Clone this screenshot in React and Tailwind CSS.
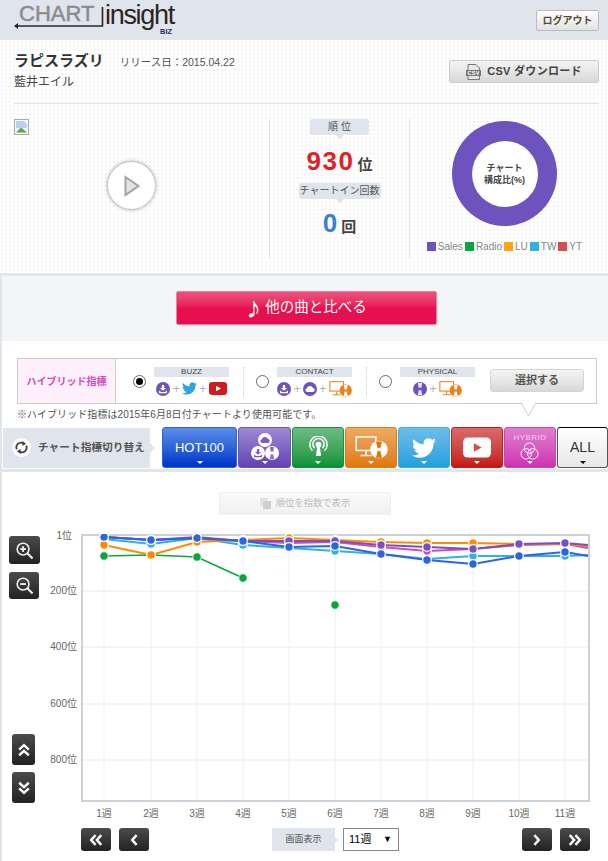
import React from "react";

const FONT = { fontFamily: '"Liberation Sans", "Noto Sans CJK JP", sans-serif' };

const weeks = ["1週", "2週", "3週", "4週", "5週", "6週", "7週", "8週", "9週", "10週", "11週"];
const weekX = [24, 71, 117, 163, 209, 255, 301, 347, 393, 439, 485];

// chart series, y values in px from the top of the plot (last value runs off the right edge)
const series = [
  { color: "#33aee6", pts: [5, 10, 4, 11, 14, 17, 20, 25, 22, 22, 22, 21] },
  { color: "#d14cb8", pts: [3, 6, 3, 7, 9, 8, 13, 17, 15, 11, 10, 14] },
  { color: "#ff8c00", pts: [11, 21, 8, 6, 4, 6, 8, 9, 9, 10, 10, 12] },
  { color: "#7a4fc0", pts: [3, 6, 4, 7, 7, 7, 11, 13, 15, 10, 9, 11] },
  { color: "#2a66e0", pts: [3, 6, 4, 7, 13, 12, 20, 26, 30, 22, 18, 22] },
];

const Triangle = ({ className }) => (
  <span className={`block w-0 h-0 border-l-[3px] border-r-[3px] border-t-[3px] border-l-transparent border-r-transparent ${className}`} />
);

const DarkButton = ({ className, children }) => (
  <button className={`flex items-center justify-center rounded-[3px] bg-gradient-to-b from-[#4c4c4c] to-[#222] text-white ${className}`}>
    {children}
  </button>
);

const Chevrons = ({ dir, double, size = 14 }) => {
  const rot = { left: 0, right: 180, up: 90, down: 270 }[dir];
  return (
    <svg width={size} height={size} viewBox="0 0 16 16" fill="none" stroke="white" strokeWidth="2.8" style={{ transform: `rotate(${rot}deg)` }}>
      {double ? (
        <>
          <path d="M7.5 2.5 L2.5 8 L7.5 13.5" />
          <path d="M14 2.5 L9 8 L14 13.5" />
        </>
      ) : (
        <path d="M11 2.5 L6 8 L11 13.5" />
      )}
    </svg>
  );
};

const Zoom = ({ minus }) => (
  <svg width="19" height="19" viewBox="0 0 20 20" fill="none" stroke="#eee" strokeWidth="1.7">
    <circle cx="8.5" cy="8.5" r="6.2" />
    <path d="M13 13 L18.5 18.5" strokeWidth="2.2" />
    <path d="M5.5 8.5 H11.5" strokeWidth="2" />
    {!minus && <path d="M8.5 5.5 V11.5" strokeWidth="2" />}
  </svg>
);

// small round metric icons
const SalesIcon = ({ size = 14, color = "#6e52bd", fg = "white" }) => (
  <svg width={size} height={size} viewBox="0 0 16 16">
    <circle cx="8" cy="8" r="8" fill={color} />
    <path d="M6.7 3.5 H9.3 V6.8 H11.5 L8 10 L4.5 6.8 H6.7 Z M3.5 10 H5 V11.3 H11 V10 H12.5 V12.8 H3.5 Z" fill={fg} />
  </svg>
);
const CloudIcon = ({ size = 14, color = "#6e52bd", fg = "white" }) => (
  <svg width={size} height={size} viewBox="0 0 16 16">
    <circle cx="8" cy="8" r="8" fill={color} />
    <path d="M4.5 11.5 A2.3 2.3 0 0 1 4.5 7 A3.6 3.6 0 0 1 11.2 6.6 A2.5 2.5 0 0 1 11.5 11.5 Z" fill={fg} />
  </svg>
);
const DiscIcon = ({ size = 14, color = "#6e52bd", fg = "white" }) => (
  <svg width={size} height={size} viewBox="0 0 16 16">
    <circle cx="8" cy="8" r="8" fill={color} />
    <path d="M5.5 1 L10.5 1 L9.2 8 L10.5 15 L5.5 15 L6.8 8 Z" fill={fg} opacity="0.85" />
    <circle cx="8" cy="8" r="1.7" fill={color} />
  </svg>
);
const TwitterIcon = ({ size = 15, color = "#2ba6e1" }) => (
  <svg width={size} height={size} viewBox="0 0 24 24" fill={color}>
    <path d="M23.95 4.57a10 10 0 0 1-2.82.77 4.96 4.96 0 0 0 2.16-2.72c-.95.56-2 .96-3.12 1.19a4.92 4.92 0 0 0-8.38 4.48C7.69 8.1 4.07 6.13 1.64 3.16a4.82 4.82 0 0 0-.67 2.48c0 1.71.87 3.21 2.19 4.1a4.9 4.9 0 0 1-2.23-.62v.06a4.92 4.92 0 0 0 3.95 4.83 4.9 4.9 0 0 1-2.21.08 4.94 4.94 0 0 0 4.6 3.42A9.87 9.87 0 0 1 0 19.54a13.94 13.94 0 0 0 7.55 2.21c9.05 0 14-7.5 14-13.98 0-.21 0-.42-.02-.63a9.94 9.94 0 0 0 2.46-2.55z" />
  </svg>
);
const YoutubeIcon = ({ w = 18, h = 13, bg = "#d01c1c", fg = "white" }) => (
  <svg width={w} height={h} viewBox="0 0 18 13">
    <rect width="18" height="13" rx="3" fill={bg} />
    <path d="M7 3.8 L12 6.5 L7 9.2 Z" fill={fg} />
  </svg>
);
const MonitorIcon = ({ w = 23, h = 16, color = "#ee7f1a", disc = "#ee7f1a", inner = "white" }) => (
  <svg width={w} height={h} viewBox="0 0 24 17" fill="none">
    <rect x="0.7" y="0.7" width="14.5" height="10" stroke={color} strokeWidth="1.1" />
    <path d="M8 11 V14 M4 14.5 H12" stroke={color} strokeWidth="1.1" />
    <circle cx="17.5" cy="10" r="6.5" fill={disc} />
    <path d="M15.3 4 L19.7 4 L18.3 10 L19.7 16 L15.3 16 L16.7 10 Z" fill={inner} />
    <circle cx="17.5" cy="10" r="1.3" fill={disc} />
  </svg>
);
const Plus = () => <span className="text-[#b5b5b5] text-[13px] leading-none mx-[2px]">+</span>;

const HybridOption = ({ checked, label, children, divider }) => (
  <div className={`flex items-start ${divider ? "border-l border-dotted border-[#ccd] ml-[14px] pl-[12px]" : ""}`}>
    <span className="mt-[8px] w-[13px] h-[13px] rounded-full border border-[#666] bg-white flex items-center justify-center shrink-0">
      {checked && <span className="w-[7px] h-[7px] rounded-full bg-black" />}
    </span>
    <div className="ml-[8px] w-[75px] flex flex-col items-center">
      <div className="w-full h-[10px] bg-[#e0e4ec] text-[8px] leading-[10px] text-center text-[#444]">{label}</div>
      <div className="flex items-center mt-[4px] h-[16px]">{children}</div>
    </div>
  </div>
);

const Tab = ({ w, className, children, triangle = "border-t-white" }) => (
  <div className={`relative h-[41px] rounded-[3px] border flex flex-col items-center shrink-0 ${className}`} style={{ width: w }}>
    <div className="flex-1 flex items-center justify-center">{children}</div>
    <Triangle className={`absolute bottom-[3px] left-1/2 -ml-[3px] ${triangle}`} />
  </div>
);

const LegendItem = ({ color, label }) => (
  <span className="flex items-center">
    <span className="w-[9px] h-[9px] mr-[2px]" style={{ backgroundColor: color }} />
    <span>{label}</span>
  </span>
);

const RankChart = () => {
  const W = 508;
  const H = 268;
  const xs = weekX;
  const gridY = [57, 113, 170, 226];
  const px = (i) => (i < xs.length ? xs[i] : W);
  const ptsStr = (pts) => pts.map((y, i) => `${px(i)},${y}`).join(" ");
  return (
    <svg width={W + 2} height={H} viewBox={`0 0 ${W + 2} ${H}`} className="block">
      <rect x="0" y="0" width={W + 2} height={H} fill="white" />
      {xs.map((x) => (
        <line key={x} x1={x} y1="0" x2={x} y2={H} stroke="#eef0f2" />
      ))}
      {gridY.map((y) => (
        <line key={y} x1="0" y1={y} x2={W} y2={y} stroke="#e8eaec" />
      ))}
      <path d={`M2 ${H} V1 H${W + 1} V${H - 1} H1`} fill="none" stroke="#cdd2da" strokeWidth="2" />
      {/* green line stops at week 4, one lone point at week 6 */}
      <polyline points="24,22 71,21 117,23 163,44" fill="none" stroke="#09a63f" strokeWidth="1.6" />
      {[[24, 22], [71, 21], [117, 23], [163, 44], [255, 71]].map(([x, y]) => (
        <circle key={x} cx={x} cy={y} r="4.2" fill="#09a63f" stroke="white" strokeWidth="0.8" />
      ))}
      {series.map((s) => (
        <g key={s.color}>
          <polyline points={ptsStr(s.pts)} fill="none" stroke={s.color} strokeWidth="2" />
          {s.pts.slice(0, 11).map((y, i) => (
            <circle key={i} cx={xs[i]} cy={y} r="4.3" fill={s.color} stroke="white" strokeWidth="1.2" />
          ))}
        </g>
      ))}
    </svg>
  );
};

export default function App() {
  return (
    <div className="w-[608px] h-[861px] overflow-hidden bg-[#e0e4ec] text-[#333]" style={FONT}>
      {/* header */}
      <header className="h-[40px] bg-[#e0e4ec] flex items-center justify-between pl-[14px] pr-[9px]">
        <div className="relative w-[162px] h-[36px]">
          <span className="absolute left-[5px] top-[1px] text-[22px] leading-[22px] text-[#8c8c8c] [-webkit-text-stroke:0.5px_#8c8c8c]">CHART</span>
          <span className="absolute left-[91px] top-[1px] text-[27px] leading-[24px] text-[#2d2522] tracking-[-1.3px]">insight</span>
          <span className="absolute left-[146px] top-[26px] text-[7.5px] leading-[8px] font-bold text-[#2a2a70]">BIZ</span>
          <svg width="90" height="24" viewBox="0 0 90 24" className="absolute left-0 top-[3px]">
            <path d="M3 21 H88.5 V2" fill="none" stroke="#2d2522" strokeWidth="1.6" />
            <path d="M0 21 L4 18 V24 Z" fill="#2d2522" />
          </svg>
        </div>
        <button className="w-[63px] h-[21px] rounded-[2px] border border-[#bbb] bg-gradient-to-b from-white to-[#e2e2e2] text-[10px] font-bold text-[#554a30]">ログアウト</button>
      </header>

      {/* song info */}
      <section className="h-[233px] bg-white bg-[radial-gradient(#f4f4f4_1px,transparent_1px)] bg-[length:4px_4px] pl-[14px] pr-[9px] pt-[11px]">
        <div className="flex justify-between h-[53px] border-b border-[#e2e2e2]">
          <div>
            <div className="flex items-baseline">
              <span className="text-[15px] leading-[20px] font-bold text-[#333]">ラピスラズリ</span>
              <span className="ml-[16px] text-[10.5px] text-[#555]">リリース日：2015.04.22</span>
            </div>
            <div className="text-[12px] leading-[20px] mt-[1px] text-[#444]">藍井エイル</div>
          </div>
          <button className="mt-[9px] w-[150px] h-[23px] rounded-[2px] border border-[#ccc] bg-gradient-to-b from-[#f4f4f4] to-[#d8d8d8] flex items-center justify-center text-[11px] font-bold text-[#444] tracking-[0.3px]">
            <svg width="15" height="16" viewBox="0 0 15 16" className="mr-[6px]">
              <path d="M2 .5 H10 L13.5 4 V15.5 H2 Z" fill="#e8e8e8" stroke="#777" />
              <rect x="0" y="6" width="15" height="6" fill="#777" />
              <text x="7.5" y="11" fontSize="5.5" textAnchor="middle" fill="white">CSV</text>
            </svg>
            CSV ダウンロード
          </button>
        </div>

        <div className="flex mt-[15px] h-[139px]">
          {/* jacket + play */}
          <div className="relative w-[256px] border-r border-[#e2e2e2]">
            <svg width="15" height="16" viewBox="0 0 15 16" className="absolute left-0 top-0">
              <rect x="0.5" y="0.5" width="14" height="15" fill="#f4f8fc" stroke="#aaa" />
              <path d="M2 2 H10 L13 5 V9 L2 9 Z" fill="#b9d2f0" />
              <path d="M2 13.5 L7 8.5 L13 13.5 Z" fill="#58a83c" />
            </svg>
            <div className="absolute left-[94px] top-[43px] w-[47px] h-[47px] rounded-full bg-white shadow-[0_0_4px_rgba(0,0,0,0.5)] flex items-center justify-center">
              <svg width="16" height="22" viewBox="0 0 16 22" className="ml-[1px]">
                <path d="M1.5 2 L14.5 11 L1.5 20 Z" fill="#e4e4e4" stroke="#a5a5a5" strokeWidth="2" />
              </svg>
            </div>
          </div>

          {/* rank */}
          <div className="w-[140px] border-r border-[#e2e2e2] flex flex-col items-center">
            <div className="relative w-[59px] h-[16px] rounded-[2px] bg-[#e0e4ec] text-[10px] leading-[16px] text-center text-[#555]">
              順 位
              <span className="absolute left-1/2 -ml-[4px] top-full w-0 h-0 border-l-[4px] border-r-[4px] border-t-[4px] border-l-transparent border-r-transparent border-t-[#e0e4ec]" />
            </div>
            <div className="flex items-baseline mt-[11px] h-[31px]">
              <span className="text-[26px] leading-[31px] font-bold text-[#e01f26] tracking-[1.5px]">930</span>
              <span className="ml-[3px] text-[15px] font-bold text-[#444]">位</span>
            </div>
            <div className="relative w-[82px] h-[16px] mt-[6px] rounded-[2px] bg-[#e0e4ec] text-[10px] leading-[16px] text-center text-[#555] whitespace-nowrap">
              チャートイン回数
              <span className="absolute left-1/2 -ml-[4px] top-full w-0 h-0 border-l-[4px] border-r-[4px] border-t-[4px] border-l-transparent border-r-transparent border-t-[#e0e4ec]" />
            </div>
            <div className="flex items-baseline mt-[9px]">
              <span className="text-[26px] leading-[31px] font-bold text-[#3a7fd5]">0</span>
              <span className="ml-[4px] text-[15px] font-bold text-[#444]">回</span>
            </div>
          </div>

          {/* share donut */}
          <div className="flex-1 flex flex-col items-center">
            <div className="relative w-[105px] h-[105px] mt-[2px] rounded-full bg-[#6e52bd] flex items-center justify-center">
              <div className="w-[66px] h-[66px] rounded-full bg-white flex flex-col items-center justify-center text-[9px] leading-[12px] font-bold text-[#444]">
                <span>チャート</span>
                <span>構成比(%)</span>
              </div>
            </div>
            <div className="flex items-center gap-[2px] mt-[13px] text-[10px] text-[#888] whitespace-nowrap">
              <LegendItem color="#6e52bd" label="Sales" />
              <LegendItem color="#09a63f" label="Radio" />
              <LegendItem color="#ffa514" label="LU" />
              <LegendItem color="#33aee6" label="TW" />
              <LegendItem color="#d94f4f" label="YT" />
            </div>
          </div>
        </div>
      </section>

      {/* compare */}
      <div className="mt-[3px] h-[65px] ml-[2px] bg-[#f3f5f7] flex items-center justify-center">
        <button className="w-[261px] h-[34px] ml-[3px] -mt-[1px] rounded-[2px] border border-[#f07fa0] bg-gradient-to-b from-[#ee5080] via-[#e60f50] via-50% to-[#e60f50] text-white text-[14.5px] flex items-center justify-center">
          <span className="text-[30px] leading-[30px] mr-[4px]">♪</span>他の曲と比べる
        </button>
      </div>

      {/* main panel */}
      <main className="ml-[2px] bg-white h-[520px]">
        {/* hybrid box */}
        <div className="pt-[17px] pl-[15px]">
          <div className="relative w-[580px] h-[46px] border border-[#ccc] flex items-center bg-white">
            <div className="relative w-[98px] h-full bg-[#fdf0fa] border-r border-[#ccc] flex items-center justify-center text-[10px] font-bold text-[#d24cc0]">
              ハイブリッド指標
            </div>
            <div className="flex items-start pl-[17px] h-[30px] mt-[1px]">
              <HybridOption checked label="BUZZ">
                <SalesIcon />
                <Plus />
                <TwitterIcon />
                <Plus />
                <YoutubeIcon />
              </HybridOption>
              <HybridOption label="CONTACT" divider>
                <SalesIcon />
                <Plus />
                <CloudIcon />
                <Plus />
                <MonitorIcon />
              </HybridOption>
              <HybridOption label="PHYSICAL" divider>
                <DiscIcon />
                <Plus />
                <MonitorIcon />
              </HybridOption>
            </div>
            <button className="absolute left-[472px] top-[10px] w-[94px] h-[23px] rounded-[3px] border border-[#d5d5d5] bg-gradient-to-b from-[#f4f4f4] to-[#d8d8d8] text-[11px] font-bold text-[#555]">選択する</button>
            {/* speech tail pointing at the HYBRID tab */}
            <svg width="15" height="15" viewBox="0 0 15 15" className="absolute left-[503px] top-full -mt-[1px]">
              <path d="M0 0.5 L7.5 14 L15 0.5" fill="white" stroke="#ccc" />
            </svg>
          </div>
          <div className="mt-[4px] text-[10px] leading-[14px] tracking-[0.08px] text-[#555]">※ハイブリッド指標は2015年6月8日付チャートより使用可能です。</div>
        </div>

        {/* chart switcher */}
        <div className="mt-[5px] flex items-center">
          <div className="relative w-[147px] h-[40px] ml-[1px] bg-[#e0e4ec] flex items-center pl-[9px] text-[10.7px] font-bold text-[#555] whitespace-nowrap">
            <span className="w-[19px] h-[19px] rounded-full bg-white flex items-center justify-center mr-[7px] shrink-0">
              <svg width="13" height="13" viewBox="0 0 14 14" fill="none" stroke="#444" strokeWidth="2">
                <path d="M2 9 A5 5 0 0 1 9 2.5" />
                <path d="M12 5 A5 5 0 0 1 5 11.5" />
                <path d="M8 0 L12 3 L8 5.5 Z" fill="#444" stroke="none" />
                <path d="M6 14 L2 11 L6 8.5 Z" fill="#444" stroke="none" />
              </svg>
            </span>
            チャート指標切り替え
            <span className="absolute left-full top-1/2 -mt-[5px] w-0 h-0 border-t-[5px] border-b-[5px] border-l-[5px] border-t-transparent border-b-transparent border-l-[#e0e4ec]" />
          </div>
          <div className="flex gap-[1px] ml-[12px]">
            <Tab w={75} className="border-[#2a66d8] bg-gradient-to-b from-[#5c8de8] to-[#0030c8]">
              <span className="text-white text-[13px]">HOT100</span>
            </Tab>
            <Tab w={53} className="border-[#6e52bd] bg-gradient-to-b from-[#a08ad2] to-[#6440b4]">
              <div className="flex flex-col items-center -space-y-[1px] -mt-[2px]">
                <CloudIcon size={14} color="white" fg="#7a5cc0" />
                <div className="flex space-x-[0px]">
                  <SalesIcon size={14} color="white" fg="#7a5cc0" />
                  <DiscIcon size={14} color="white" fg="#7a5cc0" />
                </div>
              </div>
            </Tab>
            <Tab w={52} className="border-[#09983a] bg-gradient-to-b from-[#6cbc84] to-[#009238]">
              <svg width="19" height="21" viewBox="0 0 22 24" fill="none" stroke="white" strokeWidth="1.8" className="-mt-[3px]">
                <circle cx="11" cy="10" r="2.5" fill="white" />
                <path d="M6.5 14 A6.5 6.5 0 1 1 15.5 14" />
                <path d="M4 17 A10 10 0 1 1 18 17" />
                <path d="M9.5 12 L8 23 H14 L12.5 12 Z" fill="white" stroke="none" />
              </svg>
            </Tab>
            <Tab w={52} className="border-[#e07c10] bg-gradient-to-b from-[#eeaa60] to-[#e07800]">
              <MonitorIcon w={33} h={23} color="white" disc="white" inner="#e07800" />
            </Tab>
            <Tab w={52} className="border-[#38aee8] bg-gradient-to-b from-[#6cbce8] to-[#1ea0de]">
              <TwitterIcon size={24} color="white" />
            </Tab>
            <Tab w={52} className="border-[#c8181c] bg-gradient-to-b from-[#d86a6a] to-[#c41414]">
              <YoutubeIcon w={28} h={21} bg="white" fg="#d94b4b" />
            </Tab>
            <Tab w={52} className="border-[#d040b8] bg-gradient-to-b from-[#e07ed0] to-[#cc30b0]">
              <div className="flex flex-col items-center -mt-[3px]">
                <span className="text-[8px] leading-[9px] tracking-[0.5px] text-[#f8d0f0]">HYBRID</span>
                <svg width="19" height="18" viewBox="0 0 20 19" fill="none" stroke="white" strokeWidth="1">
                  <circle cx="10" cy="6.5" r="5.5" />
                  <circle cx="6.5" cy="12.5" r="5.5" />
                  <circle cx="13.5" cy="12.5" r="5.5" />
                </svg>
              </div>
            </Tab>
            <Tab w={51} triangle="border-t-black" className="border-[#555] border-t-black bg-gradient-to-b from-white to-[#e8e8e8]">
              <span className="text-[#333] text-[14px]">ALL</span>
            </Tab>
          </div>
        </div>

        {/* chart */}
        <div className="mt-[1px] border-t-[3px] border-[#e0e4ec] pt-[20px]">
          <div className="flex justify-center">
            <button className="w-[172px] h-[23px] rounded-[2px] border border-[#eee] bg-gradient-to-b from-[#fafafa] to-[#f0f0f0] flex items-center justify-center text-[9.3px] text-[#bbb]">
              <svg width="11" height="11" viewBox="0 0 11 11" className="mr-[5px]">
                <rect x="0" y="0" width="8" height="8" fill="#e2e2e2" />
                <rect x="3" y="3" width="8" height="8" fill="#cfcfcf" />
              </svg>
              順位を指数で表示
            </button>
          </div>
          <div className="flex mt-[19px] h-[268px]">
            <div className="w-[78px] relative shrink-0 text-[10px] leading-[12px] text-[#666]">
              <span className="absolute right-[8px] top-[-4px]">1位</span>
              <span className="absolute right-[3px] top-[51px]">200位</span>
              <span className="absolute right-[3px] top-[107px]">400位</span>
              <span className="absolute right-[3px] top-[164px]">600位</span>
              <span className="absolute right-[3px] top-[220px]">800位</span>
              <DarkButton className="absolute left-[7px] top-[2px] w-[31px] h-[28px]"><Zoom /></DarkButton>
              <DarkButton className="absolute left-[7px] top-[38px] w-[30px] h-[27px]"><Zoom minus /></DarkButton>
              <DarkButton className="absolute left-[10px] top-[200px] w-[23px] h-[31px]"><Chevrons dir="up" double /></DarkButton>
              <DarkButton className="absolute left-[10px] top-[238px] w-[23px] h-[31px]"><Chevrons dir="down" double /></DarkButton>
            </div>
            <RankChart />
          </div>
          <div className="flex ml-[78px] h-[19px] relative text-[10px] text-[#666]">
            {weeks.map((w, i) => (
              <span key={w} className="absolute top-[4px] w-[30px] -ml-[15px] text-center" style={{ left: weekX[i] }}>{w}</span>
            ))}
          </div>
          <div className="flex items-center mt-[7px] ml-[79px] w-[509px]">
            <DarkButton className="w-[30px] h-[23px]"><Chevrons dir="left" double /></DarkButton>
            <DarkButton className="ml-[8px] w-[30px] h-[23px]"><Chevrons dir="left" /></DarkButton>
            <div className="ml-[123px] relative w-[63px] h-[23px] bg-[#e0e4ec] text-[9px] leading-[23px] text-center text-[#555]">
              画面表示
              <span className="absolute left-full top-1/2 -mt-[3px] w-0 h-0 border-t-[3px] border-b-[3px] border-l-[3px] border-t-transparent border-b-transparent border-l-[#e0e4ec]" />
            </div>
            <div className="ml-[8px] w-[56px] h-[23px] border border-[#888] bg-white text-[11px] leading-[21px] pl-[5px] text-black flex items-center justify-between pr-[6px]">
              <span>11週</span><span className="text-[9px]">▼</span>
            </div>
            <DarkButton className="ml-auto w-[30px] h-[23px]"><Chevrons dir="right" /></DarkButton>
            <DarkButton className="ml-[8px] w-[30px] h-[23px]"><Chevrons dir="right" double /></DarkButton>
          </div>
        </div>
      </main>
    </div>
  );
}
